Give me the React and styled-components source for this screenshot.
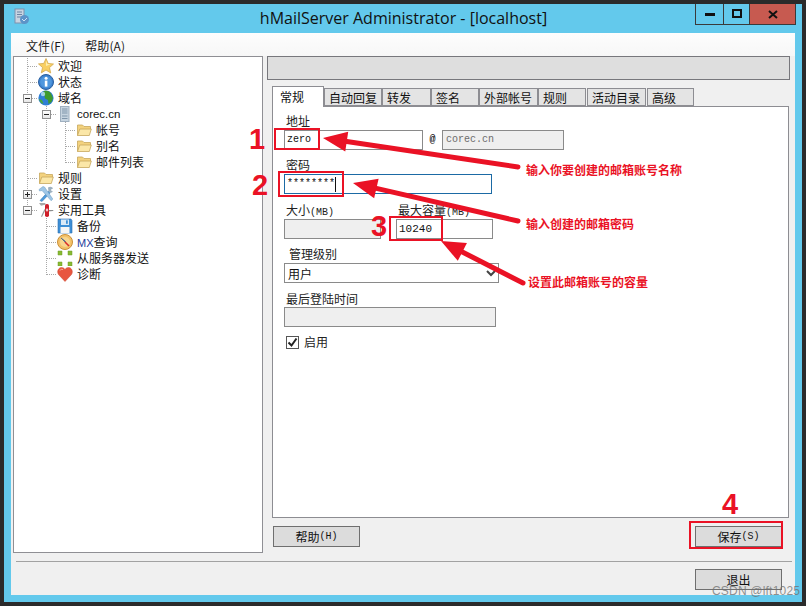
import React from "react";
import styled, { createGlobalStyle } from "styled-components";

const Global = createGlobalStyle`
  html, body { margin: 0; padding: 0; background: #2b2b2b; }
  * { box-sizing: border-box; }
`;

const CJK = `"Noto Sans CJK SC", "Noto Sans", sans-serif`;
const MONO = `"Liberation Mono", "DejaVu Sans Mono", monospace`;
const RED = "#ea1225";

const Frame = styled.div`
  position: relative;
  width: 806px;
  height: 606px;
  padding: 4px;
  overflow: hidden;
  background: #2b2b2b;
  font: 12px/16px ${CJK};
  color: #111;
`;
const Chrome = styled.div`
  width: 798px;
  height: 598px;
  padding: 0 7px 7px;
  background: #63c9ec;
  display: flex;
  flex-direction: column;
`;
const TitleBar = styled.div`
  height: 29px;
  flex: none;
  position: relative;
  display: flex;
  justify-content: center;
  margin: 0 -1px 0 0;
`;
const TitleIcon = styled.svg`
  position: absolute;
  left: 3px;
  top: 4px;
`;
const TitleText = styled.div`
  font: 16px/29px "Open Sans", "Noto Sans", sans-serif;
  color: #111;
  padding-right: 0;
`;
const Controls = styled.div`
  position: absolute;
  right: 0;
  top: 0;
  display: flex;
  height: 21px;
  border: 1px solid #3a3a3a;
  border-top: 0;
`;
const Ctl = styled.div`
  width: ${(p) => p.$w}px;
  display: flex;
  align-items: center;
  justify-content: center;
  background: ${(p) => p.$bg || "transparent"};
  border-left: ${(p) => (p.$div ? "1px solid #3a3a3a" : "0")};
`;
const Client = styled.div`
  flex: 1;
  background: #f0f0f0;
  display: flex;
  flex-direction: column;
`;
const MenuBar = styled.div`
  height: 23px;
  flex: none;
  display: flex;
  align-items: center;
  gap: 20px;
  padding: 3px 0 0 15px;
  background: linear-gradient(#fdfdfd, #f7f7f7);
`;
const MenuItem = styled.span`
  color: #1a1a1a;
  letter-spacing: 0.1px;
`;
const Main = styled.div`
  display: flex;
  gap: 4px;
  padding-left: 2px;
  height: 497px;
  flex: none;
`;
const Tree = styled.div`
  width: 250px;
  flex: none;
  border: 1px solid #8f8f94;
  background: #fff;
  padding: 1px 0 0 4px;
`;
const Row = styled.div`
  height: 16px;
  display: flex;
  align-items: center;
`;
const dotV = (h) =>
  `repeating-linear-gradient(180deg, #a8a8a8 0 1px, transparent 1px 2px) 9px 0 / 1px ${h} no-repeat`;
const dotH = `repeating-linear-gradient(90deg, #a8a8a8 0 1px, transparent 1px 2px) 10px 8px / 9px 1px no-repeat`;
const Guide = styled.span`
  width: 19px;
  height: 16px;
  flex: none;
  display: flex;
  align-items: center;
  justify-content: center;
  background: ${(p) =>
    p.$kind === "pipe"
      ? dotV("16px")
      : p.$kind === "tee"
      ? `${dotV("16px")}, ${dotH}`
      : p.$kind === "end"
      ? `${dotV("9px")}, ${dotH}`
      : "none"};
`;
const Expander = styled.span`
  width: 9px;
  height: 9px;
  border: 1px solid #8f8f8f;
  background: linear-gradient(#fff, #e6e6e6);
  display: flex;
  align-items: center;
  justify-content: center;
  margin-left: -1px;
  &::before {
    content: "${(p) => (p.$open ? "" : "")}";
    display: block;
    width: 5px;
    height: 5px;
    background: ${(p) =>
      p.$open
        ? "linear-gradient(#222,#222) 0 2px / 5px 1px no-repeat"
        : "linear-gradient(#222,#222) 0 2px / 5px 1px no-repeat, linear-gradient(#222,#222) 2px 0 / 1px 5px no-repeat"};
  }
`;
const IconSlot = styled.span`
  width: 17px;
  height: 16px;
  flex: none;
  display: flex;
  align-items: center;
  justify-content: center;
  margin-right: 4px;
`;
const TreeLabel = styled.span`
  white-space: nowrap;
  font-family: ${(p) => (p.$latin ? `"Liberation Sans", sans-serif` : CJK)};
  font-size: ${(p) => (p.$latin ? "11.5px" : "12px")};
  color: ${(p) => (p.$latin ? "#111" : "#111")};
`;
const Blue = styled.span`
  font-family: "Liberation Sans", sans-serif;
  color: #1c3c9c;
  font-size: 11px;
`;

const Right = styled.div`
  width: 523px;
  flex: none;
  display: flex;
  flex-direction: column;
`;
const HeadBar = styled.div`
  height: 24px;
  flex: none;
  background: #dedede;
  border: 1px solid #77777c;
`;
const Tabs = styled.div`
  display: flex;
  align-items: flex-end;
  height: 20px;
  margin: 6px 0 0 5px;
  flex: none;
  position: relative;
  z-index: 1;
`;
const Tab = styled.div`
  width: ${(p) => p.$w}px;
  margin-right: ${(p) => p.$gap || 0}px;
  height: ${(p) => (p.$active ? 21 : 18)}px;
  padding: ${(p) => (p.$active ? "1px 0 0 7px" : "0 0 0 4px")};
  line-height: 17px;
  background: ${(p) => (p.$active ? "#fff" : "#e4e4e4")};
  border: 1px solid #8d8d92;
  border-bottom: ${(p) => (p.$active ? "0" : "1px solid #8d8d92")};
  margin-bottom: ${(p) => (p.$active ? "-1px" : "0")};
  white-space: nowrap;
  flex: none;
`;
const Panel = styled.div`
  width: 517px;
  height: 412px;
  margin-left: 5px;
  flex: none;
  background: #fff;
  border: 1px solid #8d8d92;
  padding: 6px 0 0 11px;
`;
const Label = styled.div`
  height: 16px;
  margin-left: ${(p) => p.$ml ?? 2}px;
  white-space: nowrap;
  color: #222;
`;
const FormRow = styled.div`
  display: flex;
  align-items: flex-start;
  margin-top: ${(p) => p.$mt || 0}px;
`;
const Col = styled.div`
  width: ${(p) => p.$w}px;
  margin-right: ${(p) => p.$mr || 0}px;
  flex: none;
`;
const Field = styled.div`
  width: ${(p) => p.$w}px;
  height: ${(p) => p.$h || 20}px;
  flex: none;
  display: flex;
  align-items: center;
  padding-left: ${(p) => p.$pl ?? 2}px;
  margin-top: ${(p) => p.$mt || 0}px;
  border: 1px solid ${(p) => (p.$focus ? "#1b6aa5" : "#8a8a8a")};
  background: ${(p) => (p.$off ? "#efefef" : "#fff")};
  color: ${(p) => (p.$off ? "#6d6d6d" : "#111")};
  font: ${(p) => p.$fs || 10}px/16px ${MONO};
`;
const Caret = styled.span`
  display: inline-block;
  width: 1px;
  height: 15px;
  background: #111;
`;
const At = styled.span`
  width: 19px;
  flex: none;
  text-align: center;
  font: 10px/20px ${MONO};
  font-weight: 700;
`;
const Select = styled.div`
  width: 215px;
  height: 20px;
  border: 1px solid #8a8a8a;
  background: #fff;
  padding-left: 3px;
  font: 12px/17px ${CJK};
  display: flex;
  align-items: center;
  justify-content: space-between;
`;
const Check = styled.span`
  width: 13px;
  height: 13px;
  margin: 0 5px 0 2px;
  border: 1px solid #555;
  background: #fff;
  display: flex;
  align-items: center;
  justify-content: center;
`;
const CheckRow = styled.div`
  display: flex;
  align-items: center;
  margin-top: 7px;
  height: 16px;
  color: #222;
`;
const BtnRow = styled.div`
  display: flex;
  justify-content: space-between;
  padding: 8px 8px 0 6px;
`;
const Btn = styled.div`
  width: 87px;
  height: 21px;
  border: 1px solid #6f6f6f;
  background: #dcdcdc;
  display: flex;
  align-items: center;
  justify-content: center;
  line-height: 16px;
`;
const Latin = styled.span`
  font: 10px/16px ${MONO};
`;
const Divider = styled.div`
  height: 1px;
  margin: 8px 3px 0 5px;
  flex: none;
  background: #a2a2a2;
`;
const BottomRow = styled.div`
  display: flex;
  justify-content: flex-end;
  padding: 7px 13px 0 0;
`;

/* Things drawn on top of the screenshot */
const Overlay = styled.svg`
  position: absolute;
  left: 0;
  top: 0;
  pointer-events: none;
`;
const RedBox = styled.div`
  position: absolute;
  left: ${(p) => p.$x}px;
  top: ${(p) => p.$y}px;
  width: ${(p) => p.$w}px;
  height: ${(p) => p.$h}px;
  border: 2px solid ${RED};
`;
const Num = styled.div`
  position: absolute;
  left: ${(p) => p.$x}px;
  top: ${(p) => p.$y}px;
  font: 700 29px/30px "Liberation Sans", sans-serif;
  color: ${RED};
`;
const Note = styled.div`
  position: absolute;
  left: ${(p) => p.$x}px;
  top: ${(p) => p.$y}px;
  font: 700 12px/16px ${CJK};
  color: ${RED};
  white-space: nowrap;
`;
const Watermark = styled.div`
  position: absolute;
  left: 712px;
  top: 584px;
  font: 12px/14px "Liberation Sans", sans-serif;
  color: rgba(110, 110, 110, 0.75);
  letter-spacing: 0.2px;
  white-space: nowrap;
`;

const I = ({ children, w = 16, h = 16 }) => (
  <svg width={w} height={h} viewBox="0 0 16 16">{children}</svg>
);
const Star = () => (
  <I>
    <path d="M8 0.5l2.2 5 5.3.5-4 3.6 1.2 5.4L8 12l-4.7 2.9 1.2-5.4-4-3.6 5.3-.5z" fill="#f8cf63" stroke="#d3a84c" strokeWidth=".8" />
    <path d="M8 2.5l1.4 3.5 3.4.3L8 8z" fill="#fdeeb0" />
  </I>
);
const Info = () => (
  <I>
    <circle cx="8" cy="8" r="7.5" fill="#3d82cf" stroke="#2a5f9f" />
    <circle cx="8" cy="8" r="5.8" fill="#4f97de" />
    <rect x="6.8" y="6.6" width="2.6" height="6" fill="#fff" />
    <circle cx="8.1" cy="4.3" r="1.5" fill="#fff" />
  </I>
);
const Globe = () => (
  <I>
    <circle cx="8" cy="8" r="7.6" fill="#2f7fd6" />
    <path d="M6 1c3-1 6 .5 7 2.5L15 8l-1.5 4-3 2-.5-4-3-1.5-.5-3L4 4.500z" fill="#3f9a2e" />
    <path d="M1 9l3 1 1.500 4C3 13.500 1.500 11.500 1 9z" fill="#4aa83a" />
    <circle cx="5" cy="4" r="2.200" fill="#bfe3fb" opacity=".8" />
  </I>
);
const Server = () => (
  <I>
    <rect x="3.500" y="0.500" width="8.500" height="15" fill="#c6d4e0" stroke="#9fb0c0" />
    <path d="M5 3h5.500M5 5h5.500M5 7h5.500M5 10h5.500M5 12.500h5.500" stroke="#7f95aa" />
  </I>
);
const Folder = () => (
  <I>
    <path d="M1.500 13.500V3h5l1.500 1.500h6.500V7" fill="#f3d27e" stroke="#c7a75d" strokeWidth=".8" />
    <path d="M1.500 13.500L3.800 7h11.500l-2 6.500z" fill="#fbe7a8" stroke="#c7a75d" strokeWidth=".8" />
  </I>
);
const Tools = () => (
  <I>
    <path d="M2 14.500L10.500 5l1.800 1.800L4 15.500z" fill="#4f9bdc" stroke="#2f6fa8" strokeWidth=".5" />
    <path d="M6.500 1L14.800 13l-1.600 1.800L4 4.500l-2.500.5L1 3.500 5 .5z" fill="#9fc6e6" stroke="#6d9cc0" strokeWidth=".5" />
    <path d="M10 1.500c2-1.500 4.500-.800 5 1l-2 1 .5 1.500 1.500.5c-1 1.500-3.500 1.500-4.500 0z" fill="#9db0bf" />
  </I>
);
const Knife = () => (
  <I>
    <path d="M1 1h6l1 1.500-5 1.300z" fill="#a7a7a7" />
    <path d="M10 8h5.500l-.5 1-5 .5z" fill="#8c8c8c" />
    <path d="M7.500 8L4 15l-1-.5 3.500-7.500z" fill="#9a9a9a" />
    <rect x="7" y="2" width="4" height="13" rx="1.800" fill="#cf1f2a" />
    <path d="M9 6.500v3M7.800 8h2.400" stroke="#fff" />
  </I>
);
const Floppy = () => (
  <I>
    <path d="M1 1h13l1 1.500V15H1z" fill="#3e8fd6" stroke="#2b6fb0" strokeWidth=".6" />
    <rect x="4" y="1.500" width="8" height="5.500" fill="#dbeaf7" />
    <rect x="9" y="2.300" width="1.800" height="3.500" fill="#3e8fd6" />
    <rect x="3.500" y="9" width="9" height="6" fill="#f6f6f6" />
  </I>
);
const Compass = () => (
  <I>
    <circle cx="8" cy="8" r="7.500" fill="#f4c269" stroke="#c98f38" />
    <circle cx="8" cy="8" r="5" fill="#f8d68f" />
    <path d="M4 4l4.500 3.500L8 8z" fill="#5c6f86" stroke="#5c6f86" />
    <path d="M8 8l4 4" stroke="#d92b2b" strokeWidth="1.600" />
  </I>
);
const Nodes = () => (
  <I>
    <path fill="#88bb33" stroke="#6f9a25" strokeWidth=".5" d="M1 1h4v4H1zM11 1h4v4h-4zM1 12h4v4H1zM11 12h4v4h-4z" />
  </I>
);
const Heart = () => (
  <I>
    <path d="M8 15.500L1.500 8.500C-.5 5.500 1.500 1.500 4.500 1.500 6 1.500 7.300 2.300 8 3.500 8.700 2.300 10 1.500 11.500 1.500c3 0 5 4 3 7z" fill="#e8563f" stroke="#c9452f" strokeWidth=".5" />
    <path d="M3 4.500C3.500 3.300 5 3 6 3.700" stroke="#f7b3a5" fill="none" />
  </I>
);

const TreeRow = ({ guides, open, closed, icon, children, latin }) => (
  <Row>
    {guides.map((g, i) => (
      <Guide key={i} $kind={g}>
        {i === guides.length - 1 && (open || closed) ? <Expander $open={!!open} /> : null}
      </Guide>
    ))}
    <IconSlot>{icon}</IconSlot>
    <TreeLabel $latin={latin}>{children}</TreeLabel>
  </Row>
);

const rows = [
  { g: ["tee"], icon: <Star />, t: "欢迎" },
  { g: ["tee"], icon: <Info />, t: "状态" },
  { g: ["tee"], open: 1, icon: <Globe />, t: "域名" },
  { g: ["pipe", "tee"], open: 1, icon: <Server />, t: "corec.cn", latin: 1 },
  { g: ["pipe", "pipe", "tee"], icon: <Folder />, t: "帐号" },
  { g: ["pipe", "pipe", "tee"], icon: <Folder />, t: "别名" },
  { g: ["pipe", "pipe", "end"], icon: <Folder />, t: "邮件列表" },
  { g: ["tee"], icon: <Folder />, t: "规则" },
  { g: ["tee"], closed: 1, icon: <Tools />, t: "设置" },
  { g: ["end"], open: 1, icon: <Knife />, t: "实用工具" },
  { g: ["none", "tee"], icon: <Floppy />, t: "备份" },
  { g: ["none", "tee"], icon: <Compass />, t: <><Blue>MX</Blue>查询</> },
  { g: ["none", "tee"], icon: <Nodes />, t: "从服务器发送" },
  { g: ["none", "end"], icon: <Heart />, t: "诊断" },
];

const tabs = [
  ["自动回复", 58, 0],
  ["转发", 49, 0],
  ["签名", 48, 0],
  ["外部帐号", 59, 0],
  ["规则", 48, 1],
  ["活动目录", 59, 1],
  ["高级", 47, 0],
];

const Arrow = ({ x1, y1, x2, y2 }) => {
  const a = Math.atan2(y2 - y1, x2 - x1);
  const len = 24;
  const wid = 10;
  const bx = x2 - Math.cos(a) * len;
  const by = y2 - Math.sin(a) * len;
  const nx = -Math.sin(a) * wid;
  const ny = Math.cos(a) * wid;
  return (
    <g>
      <line x1={x1} y1={y1} x2={bx} y2={by} stroke={RED} strokeWidth="5" strokeLinecap="round" />
      <polygon points={`${x2},${y2} ${bx + nx},${by + ny} ${bx - nx},${by - ny}`} fill={RED} />
    </g>
  );
};

export default function App() {
  return (
    <Frame>
      <Global />
      <Chrome>
        <TitleBar>
          <TitleIcon width="16" height="18" viewBox="0 0 16 18">
            <rect x="1" y="1" width="9" height="14" fill="#c8d4e2" stroke="#7e92ad" />
            <path d="M3 4h5M3 6.500h5M3 9h5" stroke="#6d84a3" />
            <circle cx="10.500" cy="11.500" r="4.500" fill="#5c93c8" />
            <path d="M8 11l2 2 3-3" stroke="#cfe3f5" fill="none" />
          </TitleIcon>
          <TitleText>hMailServer Administrator - [localhost]</TitleText>
          <Controls>
            <Ctl $w={27}>
              <svg width="10" height="4"><rect width="10" height="3" y="1" fill="#111" /></svg>
            </Ctl>
            <Ctl $w={26} $div>
              <svg width="10" height="10"><rect x="1" y="1" width="8" height="7" fill="none" stroke="#111" strokeWidth="2" /></svg>
            </Ctl>
            <Ctl $w={46} $bg="#c75a50" $div>
              <svg width="10" height="9"><path d="M1 1l8 7M9 1L1 8" stroke="#111" strokeWidth="2" /></svg>
            </Ctl>
          </Controls>
        </TitleBar>
        <Client>
          <MenuBar>
            <MenuItem>文件(F)</MenuItem>
            <MenuItem>帮助(A)</MenuItem>
          </MenuBar>
          <Main>
            <Tree>
              {rows.map((r, i) => (
                <TreeRow key={i} guides={r.g} open={r.open} closed={r.closed} icon={r.icon} latin={r.latin}>
                  {r.t}
                </TreeRow>
              ))}
            </Tree>
            <Right>
              <HeadBar />
              <Tabs>
                <Tab $active $w={52}>常规</Tab>
                {tabs.map(([t, w, gap]) => (
                  <Tab key={t} $w={w} $gap={gap}>{t}</Tab>
                ))}
              </Tabs>
              <Panel>
                <Label>地址</Label>
                <FormRow $mt={1}>
                  <Field $w={139}>zero</Field>
                  <At>@</At>
                  <Field $w={122} $off $pl={3}>corec.cn</Field>
                </FormRow>
                <Label as="div" style={{ marginTop: 7 }}>密码</Label>
                <FormRow $mt={1}>
                  <Field $w={208} $focus>********<Caret /></Field>
                </FormRow>
                <FormRow $mt={8}>
                  <Col $w={97} $mr={15}>
                    <Label>大小<Latin>(MB)</Latin></Label>
                    <Field $w={97} $off $mt={1} />
                  </Col>
                  <Col $w={97}>
                    <Label>最大容量<Latin>(MB)</Latin></Label>
                    <Field $w={97} $mt={1} $fs={11}>10240</Field>
                  </Col>
                </FormRow>
                <Label $ml={5} style={{ marginTop: 7 }}>管理级别</Label>
                <FormRow $mt={1}>
                  <Select>
                    用户
                    <svg width="14" height="14" viewBox="0 0 14 14">
                      <path d="M3 5l4 4 4-4" fill="none" stroke="#444" strokeWidth="2" />
                    </svg>
                  </Select>
                </FormRow>
                <Label style={{ marginTop: 8 }}>最后登陆时间</Label>
                <FormRow>
                  <Field $w={212} $off />
                </FormRow>
                <CheckRow>
                  <Check>
                    <svg width="11" height="11" viewBox="0 0 11 11">
                      <path d="M1.500 5.500l3 3 5-7" fill="none" stroke="#222" strokeWidth="2" />
                    </svg>
                  </Check>
                  启用
                </CheckRow>
              </Panel>
              <BtnRow>
                <Btn>帮助<Latin>(H)</Latin></Btn>
                <Btn>保存<Latin>(S)</Latin></Btn>
              </BtnRow>
            </Right>
          </Main>
          <Divider />
          <BottomRow>
            <Btn>退出</Btn>
          </BottomRow>
        </Client>
      </Chrome>

      <Overlay width="806" height="606" viewBox="0 0 806 606">
        <Arrow x1={518} y1={167} x2={323} y2={138} />
        <Arrow x1={518} y1={221} x2={353} y2={183} />
        <Arrow x1={523} y1={283} x2={441} y2={241} />
      </Overlay>
      <RedBox $x={274} $y={128} $w={46} $h={22} />
      <RedBox $x={278} $y={171} $w={66} $h={26} />
      <RedBox $x={389} $y={216} $w={54} $h={25} />
      <RedBox $x={689} $y={521} $w={94} $h={28} />
      <Num $x={249} $y={124}>1</Num>
      <Num $x={252} $y={170}>2</Num>
      <Num $x={371} $y={211}>3</Num>
      <Num $x={722} $y={489}>4</Num>
      <Note $x={526} $y={162}>输入你要创建的邮箱账号名称</Note>
      <Note $x={526} $y={216}>输入创建的邮箱密码</Note>
      <Note $x={528} $y={274}>设置此邮箱账号的容量</Note>
      <Watermark>CSDN @lft1025</Watermark>
    </Frame>
  );
}
